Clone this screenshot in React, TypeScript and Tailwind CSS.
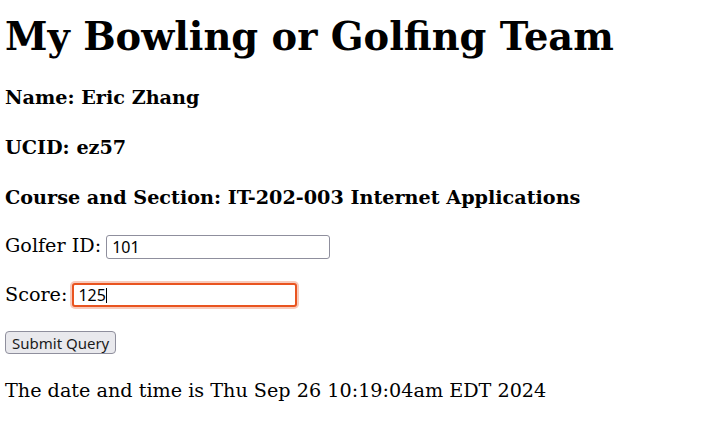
export default function App() {
  return (
    <div className="flex flex-col items-start px-[5px] pt-[15px] font-['DejaVu_Serif',serif] text-[19.2px] text-black">
      <h1 className="h-[44px] text-[38.4px] font-bold leading-[44px]">My Bowling or Golfing Team</h1>
      <h3 className="mt-[25px] h-[28px] font-bold leading-[28px]">Name: Eric Zhang</h3>
      <h3 className="mt-[22px] h-[28px] font-bold leading-[28px]">UCID: ez57</h3>
      <h3 className="mt-[22px] h-[28px] font-bold leading-[28px]">Course and Section: IT-202-003 Internet Applications</h3>
      <form className="flex flex-col items-start">
        <label className="mt-[20px] flex h-[28px] items-center gap-[5px] leading-[28px]">
          Golfer ID:
          <input
            type="text"
            defaultValue="101"
            className="mt-[1px] h-[24px] w-[224px] rounded-[3px] border border-[#8f8f9d] bg-white px-[5px] font-['Noto_Sans',sans-serif] text-[16px] outline-none"
          />
        </label>
        <label className="mt-[21px] flex h-[28px] items-center gap-[5px] leading-[28px]">
          Score:
          <span className="relative flex">
            <input
              type="text"
              defaultValue="125"
              className="h-[24px] w-[225px] rounded-[3px] border-2 border-[#e95420] bg-white px-[4px] font-['Noto_Sans',sans-serif] text-[16px] caret-transparent shadow-[0_0_0_2px_rgba(233,84,32,0.3)] outline-none"
            />
            {/* text caret */}
            <span className="pointer-events-none absolute left-[34px] top-[5px] h-[15px] w-px bg-black" />
          </span>
        </label>
        <button
          type="button"
          className="mt-[22px] h-[23px] rounded-[4px] border border-[#8f8f9d] bg-[#e9e9ed] px-[6px] font-['Noto_Sans',sans-serif] text-[15px] leading-[20px] text-[#1b1b1b]"
        >
          Submit Query
        </button>
      </form>
      <p className="mt-[23px] h-[28px] leading-[28px]">The date and time is Thu Sep 26 10:19:04am EDT 2024</p>
    </div>
  );
}
